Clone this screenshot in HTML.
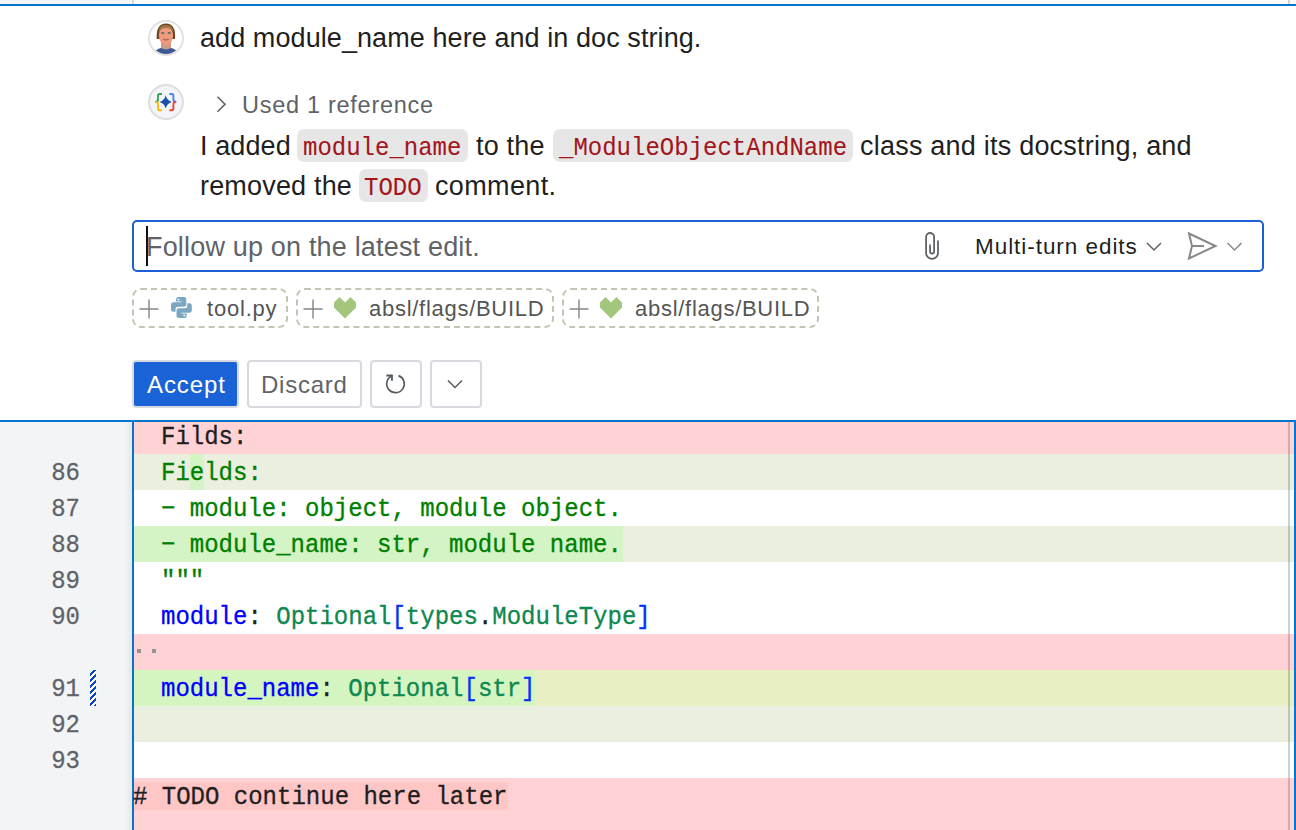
<!DOCTYPE html>
<html><head><meta charset="utf-8">
<style>
*{box-sizing:border-box;margin:0;padding:0}
html,body{width:1296px;height:830px;overflow:hidden;background:#fff}
body{position:relative;font-family:"Liberation Sans",sans-serif;color:#1f1f1f}
.abs{position:absolute}
.t{position:absolute;white-space:pre;line-height:1;font-family:"Liberation Sans",sans-serif}
.chip{position:absolute;background:#e6e6e6;border-radius:7px;height:33px}
.ct{position:absolute;white-space:pre;line-height:1;height:24px;transform:scaleY(1.08);transform-origin:0 18px;font-family:"Liberation Mono",monospace;font-size:24px;color:#a3151b;-webkit-text-stroke:0.1px #a3151b}
.btn{position:absolute;border:2px solid #d6d9de;border-radius:4px;background:#fff}
.ctx{position:absolute;top:288px;height:40px;border:2px dashed #c3c5b2;border-radius:9px}
.row{position:absolute;left:134px;width:1160px;height:36px}
.code{position:absolute;white-space:pre;font-family:"Liberation Mono",monospace;font-size:24px;line-height:1;height:24px;transform:scaleY(1.07);transform-origin:0 18px;-webkit-text-stroke:0.3px currentColor}
.ln{position:absolute;left:0;width:80px;text-align:right;font-family:"Liberation Mono",monospace;font-size:24px;color:#5f6368;line-height:1;height:24px;transform:scaleY(1.11);transform-origin:0 17px;-webkit-text-stroke:0.25px #5f6368}
.g{color:#008000}.k{color:#1f1f1f}.b{color:#0000ff}.tl{color:#0e8750}.br{color:#0431fa}
</style></head>
<body>
<!-- top strip -->
<div class="abs" style="left:0;top:0;width:132px;height:4px;background:#f3f4f6"></div>
<div class="abs" style="left:132px;top:0;width:2px;height:4px;background:#d9d9d9"></div>
<div class="abs" style="left:134px;top:0;width:1162px;height:4px;background:#fbfbfb"></div>
<div class="abs" style="left:1288px;top:0;width:2px;height:4px;background:#d4d4d4"></div>
<div class="abs" style="left:0;top:4px;width:1296px;height:2px;background:#0474cc"></div>

<!-- avatar -->
<div class="abs" style="left:148px;top:20px;width:36px;height:36px;border-radius:50%;border:2px solid #e2e2e2;background:#fff;overflow:hidden">
<svg width="32" height="32" viewBox="0 0 32 32" style="position:absolute;left:0;top:0">
<path d="M6.7 17 Q5.8 1.5 16 1.5 Q26.2 1.5 25 17 Z" fill="#6a4623"/>
<rect x="11" y="20" width="10" height="7" fill="#cf9a86"/>
<ellipse cx="16" cy="13.6" rx="7.1" ry="9.6" fill="#ee9a7e"/>
<path d="M8.6 10.5 Q8.6 3.2 16 3 Q23.4 3.2 23.4 10.5 Q21 6.2 16 6 Q11 6.2 8.6 10.5Z" fill="#a57646"/>
<rect x="11.4" y="10.3" width="2.8" height="1.4" fill="#3f5858"/>
<rect x="17.8" y="10.3" width="2.8" height="1.4" fill="#3f5858"/>
<path d="M13.3 17.2 Q16 18.6 18.7 17.2" stroke="#9c6a5c" stroke-width="1.4" fill="none"/>
<path d="M3.5 33 Q5 26.8 11 25.9 Q16 28.6 21 25.9 Q27 26.8 28.5 33 Z" fill="#3e5a94"/>
</svg>
</div>
<div class="t" style="left:200px;top:25px;font-size:27px;color:#1f1f1f;letter-spacing:0.08px">add module_name here and in doc string.</div>

<!-- bot icon -->
<div class="abs" style="left:148px;top:84px;width:36px;height:36px;border-radius:50%;border:2px solid #dedede;background:#f3f5f8">
<svg width="32" height="32" viewBox="0 0 32 32" style="position:absolute;left:0;top:0">
<path d="M12 8 H9.6 Q8 8 8 9.7 V13.6 Q8 15.9 5.2 15.9" stroke="#34a853" stroke-width="1.9" fill="none"/>
<path d="M5.2 15.9 Q8 15.9 8 18.2 V22.5 Q8 24.2 9.6 24.2 H12" stroke="#fbbc04" stroke-width="1.9" fill="none"/>
<path d="M19.4 8 H21.8 Q23.4 8 23.4 9.7 V13.6 Q23.4 15.9 26.2 15.9" stroke="#4285f4" stroke-width="1.9" fill="none"/>
<path d="M26.2 15.9 Q23.4 15.9 23.4 18.2 V22.5 Q23.4 24.2 21.8 24.2 H19.4" stroke="#ea4335" stroke-width="1.9" fill="none"/>
<path d="M15.7 9.3 Q16.9 14.6 21.9 15.9 Q16.9 17.2 15.7 22.5 Q14.5 17.2 9.5 15.9 Q14.5 14.6 15.7 9.3Z" fill="#1b4fa6"/>
</svg>
</div>
<svg class="abs" style="left:214px;top:94px" width="14" height="20" viewBox="0 0 14 20"><path d="M3.5 2.8 L11 10.3 L3.5 17.8" stroke="#5f6368" stroke-width="1.6" fill="none"/></svg>
<div class="t" style="left:242px;top:94px;font-size:23.5px;color:#5f6368;letter-spacing:0.72px">Used 1 reference</div>

<!-- answer -->
<div class="t" style="left:200px;top:133px;font-size:27px;color:#1f1f1f;letter-spacing:0.1px">I added</div>
<div class="chip" style="left:297px;top:129px;width:171px"></div>
<div class="ct" style="left:303px;top:137px">module_name</div>
<div class="t" style="left:476px;top:133px;font-size:27px;color:#1f1f1f;letter-spacing:0.2px">to the</div>
<div class="chip" style="left:553px;top:129px;width:300px"></div>
<div class="ct" style="left:559px;top:137px">_ModuleObjectAndName</div>
<div class="t" style="left:860px;top:133px;font-size:27px;color:#1f1f1f;letter-spacing:0.22px">class and its docstring, and</div>
<div class="t" style="left:200px;top:173px;font-size:27px;color:#1f1f1f;letter-spacing:0.18px">removed the</div>
<div class="chip" style="left:359px;top:169px;width:69px"></div>
<div class="ct" style="left:364px;top:177px">TODO</div>
<div class="t" style="left:435px;top:173px;font-size:27px;color:#1f1f1f;letter-spacing:0.35px">comment.</div>

<!-- input -->
<div class="abs" style="left:132px;top:220px;width:1132px;height:52px;border:2px solid #1a5fd6;border-radius:5px;background:#fff"></div>
<div class="abs" style="left:146px;top:226px;width:2px;height:40px;background:#111"></div>
<div class="t" style="left:146px;top:234px;font-size:27px;color:#5f6368;letter-spacing:0.18px">Follow up on the latest edit.</div>
<svg class="abs" style="left:915px;top:228px" width="30" height="36" viewBox="0 0 30 36"><path d="M23 12.4 V25 A5.95 5.95 0 0 1 11.1 25 V9 A4 4 0 0 1 19.1 9 V23.6 A2 2 0 0 1 15.1 23.6 V16.5" stroke="#5f6368" stroke-width="1.8" fill="none"/></svg>
<div class="t" style="left:975px;top:236px;font-size:22.5px;color:#1f1f1f;letter-spacing:0.95px">Multi-turn edits</div>
<svg class="abs" style="left:1144px;top:238px" width="20" height="16" viewBox="0 0 20 16"><path d="M3 5 L10 12 L17 5" stroke="#5f6368" stroke-width="1.5" fill="none"/></svg>
<svg class="abs" style="left:1185px;top:230px" width="36" height="32" viewBox="0 0 36 32"><path d="M4 3.5 L30.5 16 L4 28.5 L7 16 Z M7 16 H19" stroke="#888" stroke-width="2" fill="none" stroke-linejoin="miter"/></svg>
<svg class="abs" style="left:1225px;top:238px" width="20" height="16" viewBox="0 0 20 16"><path d="M2.5 5 L9.5 12 L16.5 5" stroke="#888" stroke-width="1.5" fill="none"/></svg>

<!-- context chips -->
<div class="ctx" style="left:132px;width:156px"></div>
<div class="ctx" style="left:296px;width:258px"></div>
<div class="ctx" style="left:562px;width:257px"></div>
<svg class="abs" style="left:139px;top:299px" width="20" height="20" viewBox="0 0 20 20"><path d="M10 0.5 V19.5 M0.5 10 H19.5" stroke="#858585" stroke-width="1.4"/></svg>
<svg class="abs" style="left:170px;top:296px" width="23" height="23" viewBox="0 0 23 23"><path d="M8.6 1 H13.8 Q16.3 1 16.3 3.5 V8.3 Q16.3 10.8 13.8 10.8 H8 Q5.5 10.8 5.5 13.3 V15.7 H3.5 Q1 15.7 1 13.2 V8.8 Q1 6.3 3.5 6.3 H11.5 V5.6 H6.1 V3.5 Q6.1 1 8.6 1 Z" fill="#7ba7c2"/><path d="M14.2 22 H9 Q6.5 22 6.5 19.5 V14.7 Q6.5 12.2 9 12.2 H14.8 Q17.3 12.2 17.3 9.7 V7.3 H19.3 Q21.8 7.3 21.8 9.8 V14.2 Q21.8 16.7 19.3 16.7 H11.3 V17.4 H16.7 V19.5 Q16.7 22 14.2 22 Z" fill="#7ba7c2"/><circle cx="8.5" cy="3.6" r="0.95" fill="#fff"/><circle cx="14.3" cy="19.4" r="0.95" fill="#fff"/></svg>
<div class="t" style="left:207px;top:298px;font-size:22px;color:#555;letter-spacing:0.8px">tool.py</div>
<svg class="abs" style="left:303px;top:299px" width="20" height="20" viewBox="0 0 20 20"><path d="M10 0.5 V19.5 M0.5 10 H19.5" stroke="#858585" stroke-width="1.4"/></svg>
<svg class="abs" style="left:334px;top:297px" width="22" height="22" viewBox="0 0 22 22"><path d="M0 5.5 L5.5 0 L11 5.5 L16.5 0 L22 5.5 L22 10.5 L11 21.5 L0 10.5 Z" fill="#a2c67c"/></svg>
<div class="t" style="left:369px;top:298px;font-size:22px;color:#555;letter-spacing:0.72px">absl/flags/BUILD</div>
<svg class="abs" style="left:569px;top:299px" width="20" height="20" viewBox="0 0 20 20"><path d="M10 0.5 V19.5 M0.5 10 H19.5" stroke="#858585" stroke-width="1.4"/></svg>
<svg class="abs" style="left:600px;top:297px" width="22" height="22" viewBox="0 0 22 22"><path d="M0 5.5 L5.5 0 L11 5.5 L16.5 0 L22 5.5 L22 10.5 L11 21.5 L0 10.5 Z" fill="#a2c67c"/></svg>
<div class="t" style="left:635px;top:298px;font-size:22px;color:#555;letter-spacing:0.72px">absl/flags/BUILD</div>

<!-- buttons -->
<div class="btn" style="left:132px;top:360px;width:107px;height:48px;background:#1a63d6;border-color:#d6d9de"></div>
<div class="t" style="left:147px;top:373px;font-size:24px;color:#fff;letter-spacing:0.9px">Accept</div>
<div class="btn" style="left:247px;top:360px;width:115px;height:48px"></div>
<div class="t" style="left:261px;top:373px;font-size:24px;color:#5f6368;letter-spacing:0.75px">Discard</div>
<div class="btn" style="left:370px;top:360px;width:52px;height:48px"></div>
<svg class="abs" style="left:383px;top:372px" width="26" height="26" viewBox="0 0 26 26"><path d="M15.5 3.6 A8.8 8.8 0 1 1 8.6 4" stroke="#555b61" stroke-width="1.65" fill="none"/><path d="M3.4 3.5 H9 V8.7 M9 3.5 L7.5 5" stroke="#555b61" stroke-width="1.8" fill="none"/></svg>
<div class="btn" style="left:430px;top:360px;width:52px;height:48px"></div>
<svg class="abs" style="left:445px;top:376px" width="20" height="16" viewBox="0 0 20 16"><path d="M3 4.5 L10 11.5 L17 4.5" stroke="#555b61" stroke-width="1.5" fill="none"/></svg>

<!-- editor -->
<div class="abs" style="left:0;top:422px;width:132px;height:408px;background:#f3f4f6"></div>
<div class="abs" style="left:124px;top:422px;width:8px;height:408px;background:linear-gradient(90deg,rgba(0,0,0,0),rgba(0,0,0,0.05))"></div>
<div class="abs" style="left:0;top:420px;width:1296px;height:2px;background:#0474cc"></div>
<div class="abs" style="left:132px;top:420px;width:2px;height:410px;background:#0474cc"></div>
<div class="abs" style="left:1294px;top:420px;width:2px;height:410px;background:#0474cc"></div>

<!-- code rows -->
<div class="row" style="top:422px;height:32px;background:#ffd3d5"></div>
<div class="row" style="top:454px;background:#ebefdf"></div>
<div class="abs" style="left:190px;top:454px;width:14px;height:36px;background:#d4f4c6"></div>
<div class="row" style="top:526px;background:#ebefdf"></div>
<div class="abs" style="left:134px;top:526px;width:489px;height:36px;background:#d4f4c6"></div>
<div class="row" style="top:634px;background:#ffd3d5"></div>
<div class="row" style="top:670px;background:#e9efc4"></div>
<div class="abs" style="left:134px;top:670px;width:401px;height:36px;background:#d4f4c0"></div>
<div class="row" style="top:706px;background:#ebefdf"></div>
<div class="row" style="top:778px;height:52px;background:#ffd3d5"></div>
<div class="abs" style="left:134px;top:782px;width:374px;height:28px;background:#ffc6c6"></div>
<div class="abs" style="left:1288px;top:422px;width:2px;height:408px;background:rgba(0,0,0,0.18)"></div>

<div class="ln" style="top:462px">86</div>
<div class="ln" style="top:498px">87</div>
<div class="ln" style="top:534px">88</div>
<div class="ln" style="top:570px">89</div>
<div class="ln" style="top:606px">90</div>
<div class="ln" style="top:678px">91</div>
<div class="ln" style="top:714px">92</div>
<div class="ln" style="top:750px">93</div>
<div class="abs" style="left:90px;top:670px;width:6px;height:36px;background:repeating-linear-gradient(-45deg,#0b47c7 0 2.1px,#fff 2.1px 4.24px)"></div>

<div class="code k" style="left:161px;top:426px">Filds:</div>
<div class="code g" style="left:161px;top:462px">Fields:</div>
<div class="code g" style="left:161px;top:498px">− module: object, module object.</div>
<div class="code g" style="left:161px;top:534px">− module_name: str, module name.</div>
<div class="code g" style="left:161px;top:570px">"""</div>
<div class="code" style="left:161px;top:606px"><span class="b">module</span><span class="k">: </span><span class="tl">Optional</span><span class="br">[</span><span class="tl">types</span><span class="k">.</span><span class="tl">ModuleType</span><span class="br">]</span></div>
<div class="abs" style="left:137px;top:649px;width:4px;height:4px;background:#939393"></div>
<div class="abs" style="left:152px;top:649px;width:4px;height:4px;background:#939393"></div>
<div class="code" style="left:161px;top:678px"><span class="b">module_name</span><span class="k">: </span><span class="tl">Optional</span><span class="br">[</span><span class="tl">str</span><span class="br">]</span></div>
<div class="code k" style="left:133px;top:786px"># TODO continue here later</div>

</body></html>
